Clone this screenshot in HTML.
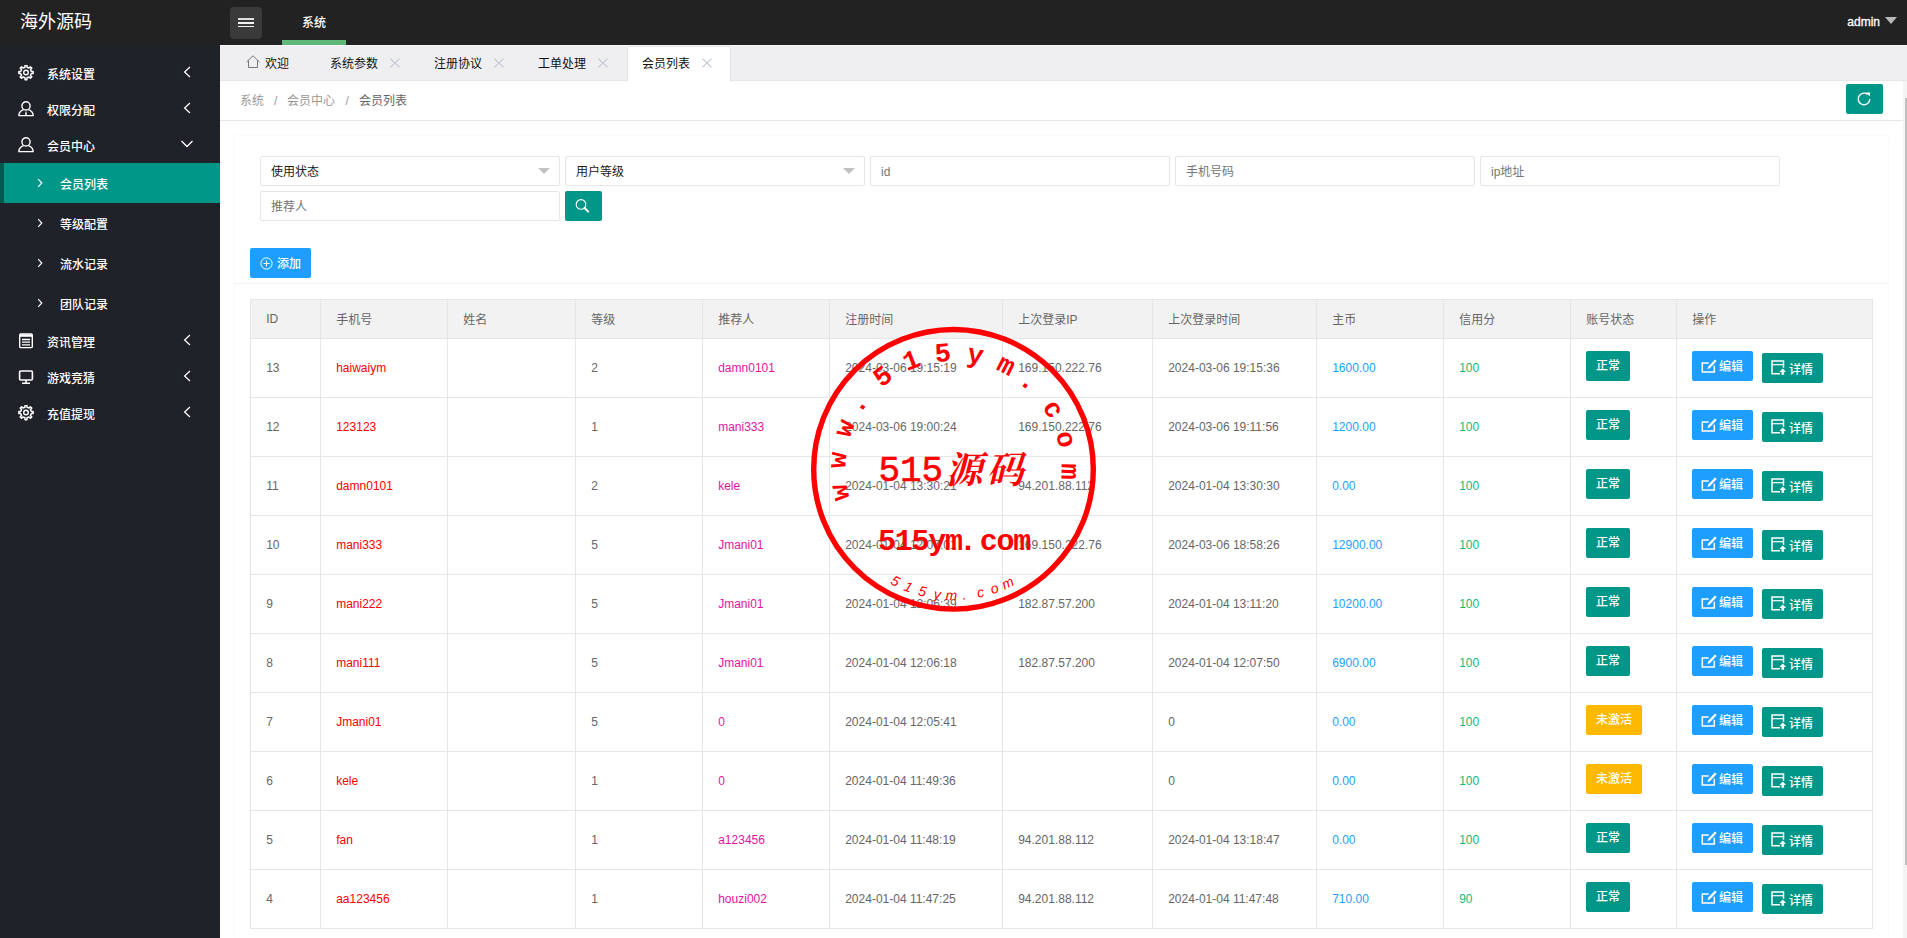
<!DOCTYPE html>
<html lang="zh-CN">
<head>
<meta charset="utf-8">
<title>海外源码</title>
<style>
*{box-sizing:border-box}
html,body{margin:0;padding:0}
html{width:1907px;height:938px;overflow:hidden}
body{width:1907px;height:938px;overflow:hidden;position:relative;background:#fff;font-family:"Liberation Sans","Noto Sans CJK SC",sans-serif;font-size:12px;color:#666}
.abs{position:absolute}
#header{left:0;top:0;width:1907px;height:45px;background:#222}
#logo{left:20px;top:0;height:45px;line-height:45px;font-size:18px;color:#fff}
#menubtn{left:230px;top:7px;width:32px;height:32px;border-radius:4px;background:#3a3a3a}
#menubtn i{position:absolute;left:8px;width:16px;height:1.400px;background:#f2f2f2}
#sys{left:282px;top:0;width:64px;height:45px;line-height:47px;font-weight:500;text-align:center;color:#fff}
#sysbar{left:282px;top:40px;width:64px;height:5px;background:#5FB878}
#admin{left:1838px;top:0;height:45px;line-height:44px;color:#fff;width:42px;text-align:right;-webkit-text-stroke:0.3px #fff}
#caret{left:1885px;top:17px;width:0;height:0;border-left:6px solid transparent;border-right:6px solid transparent;border-top:7px solid #b9b9b9}
#side{left:0;top:45px;width:220px;height:893px;background:#20222A}
.mi{position:absolute;left:0;width:220px;height:36px;line-height:36px;color:#fff}
.mi .t{position:absolute;left:47px;top:2px;font-weight:500}
.mi svg.ic{position:absolute;left:18px;top:10px}
.mi svg.ar{position:absolute;left:182px;top:10px}
.si{position:absolute;left:0;width:220px;height:40px;line-height:40px;color:#fff}
.si .t{position:absolute;left:60px;top:2px;font-weight:500}
.si svg{position:absolute;left:36px;top:14px}
.si.on{background:#009688;border-left:4px solid #04584f}
.si.on .t{left:56px}
.si.on svg{left:32px}
#tabs{left:220px;top:45px;width:1687px;height:36px;background:#EFEFF1;border-bottom:1px solid #e6e6e8;border-top:1px solid #f8f8f9}
.tab{position:absolute;top:-1px;height:35px;line-height:39px;color:#111}
.tab.on{background:#fff;height:36px;top:0.500px;line-height:34px;box-shadow:0 0 1.5px rgba(0,0,0,.18)}
.x{position:absolute;top:11.500px}
#crumb{left:220px;top:81px;width:1683px;height:40px;background:#fff;border-bottom:1px solid #e6e6e6;line-height:40px;color:#999}
#refresh{left:1846px;top:84px;width:37px;height:30px;background:#009688;border-radius:2px}
#card{left:235px;top:136px;width:1653px;height:802px;background:#fff;box-shadow:0 0 2px rgba(0,0,0,.06)}
#cardhead{left:235px;top:283px;width:1653px;height:1px;background:#f2f2f2}
.inp{position:absolute;width:300px;height:30px;border:1px solid #e6e6e6;border-radius:2px;background:#fff;line-height:30px;padding-left:10px;color:#757575}
.inp.sel{color:#1a1a1a;line-height:31px}
.inp.sel:after{content:"";position:absolute;right:9px;top:11px;border-left:6px solid transparent;border-right:6px solid transparent;border-top:6px solid #c2c2c2}
#search{left:565px;top:191px;width:37px;height:30px;background:#009688;border-radius:2px}
#add{left:250px;top:248px;width:61px;height:30px;background:#1E9FFF;border-radius:2px;color:#fff;line-height:32px;font-weight:500}
table{position:absolute;left:250px;top:299px;border-collapse:collapse;table-layout:fixed;width:1623px}
td.b{padding-left:15px}
th,td{border:1px solid #e6e6e6;padding:0 15px 0 15.200px;text-align:left;font-weight:normal;white-space:nowrap;overflow:visible}
th{height:39px;background:#f2f2f2;color:#666;padding-bottom:2px}
th:first-child{padding-bottom:0}
td{height:59px;color:#666}
td.red{color:#f00}
td.pink{color:#e5139f}
td.blue{color:#1E9FFF}
td.green{color:#16b777}
.btn{display:inline-block;height:30px;line-height:30px;border-radius:2px;color:#fff;text-align:center;vertical-align:top;position:relative;font-weight:500}
.btn.st{top:-2px}
.btn.ok{width:44px;background:#009688}
.btn.warn{width:56px;background:#FFB800}
.btn.edit{width:61px;background:#1E9FFF;top:-2px;margin-right:9px}
.btn.detail{width:61px;background:#009688;top:0}
.btn .bt{position:absolute;left:27px;top:0;line-height:33px}
.btn.detail .bt{line-height:34px}
.bi{position:absolute;left:9px;top:7px}
#sbtrack{left:1903px;top:81px;width:4px;height:857px;background:#f4f4f4}
#sbthumb{left:1905px;top:98px;width:2px;height:767px;background:#c1c1c1}
</style>
</head>
<body>
<div id="header" class="abs"></div>
<div id="logo" class="abs">海外源码</div>
<div id="menubtn" class="abs"><i style="top:11.2px;background:#ddd"></i><i style="top:15.2px"></i><i style="top:19px"></i></div>
<div id="sys" class="abs">系统</div>
<div id="sysbar" class="abs"></div>
<div id="admin" class="abs">admin</div>
<div id="caret" class="abs"></div>

<div id="side" class="abs">
  <div class="mi" style="top:10px"><svg class="ic" width="16" height="16" viewBox="0 0 16 16"><path d="M13.30 6.48 L15.14 6.55 L15.14 8.45 L13.30 8.52 L12.47 10.53 L13.72 11.88 L12.38 13.22 L11.03 11.97 L9.02 12.80 L8.95 14.64 L7.05 14.64 L6.98 12.80 L4.97 11.97 L3.62 13.22 L2.28 11.88 L3.53 10.53 L2.70 8.52 L0.86 8.45 L0.86 6.55 L2.70 6.48 L3.53 4.47 L2.28 3.12 L3.62 1.78 L4.97 3.03 L6.98 2.20 L7.05 0.36 L8.95 0.36 L9.02 2.20 L11.03 3.03 L12.38 1.78 L13.72 3.12 L12.47 4.47Z" fill="none" stroke="#fff" stroke-width="1.5" stroke-linejoin="round"/><circle cx="8" cy="7.5" r="2.3" fill="none" stroke="#fff" stroke-width="1.4"/></svg><span class="t">系统设置</span><svg class="ar" width="10" height="14" viewBox="0 0 10 14"><path d="M8 2L2.600 7 8 12" fill="none" stroke="#fff" stroke-width="1.25"/></svg></div>
  <div class="mi" style="top:46px"><svg class="ic" width="16" height="16" viewBox="0 0 16 16"><circle cx="8" cy="4.900" r="4.100" fill="none" stroke="#fff" stroke-width="1.4"/><path d="M.8 14.500c.2-3 2-5 4.800-5.900M15.200 14.500c-.2-3-2-5-4.800-5.900M.3 14.600h15.400" fill="none" stroke="#fff" stroke-width="1.4"/><path d="M8 9.500l-1 3.800 1 1 1-1z" fill="#fff"/></svg><span class="t">权限分配</span><svg class="ar" width="10" height="14" viewBox="0 0 10 14"><path d="M8 2L2.600 7 8 12" fill="none" stroke="#fff" stroke-width="1.25"/></svg></div>
  <div class="mi" style="top:82px"><svg class="ic" width="16" height="16" viewBox="0 0 16 16"><circle cx="8" cy="4.900" r="4.100" fill="none" stroke="#fff" stroke-width="1.4"/><path d="M.8 14.500c.2-3 2-5 4.800-5.900M15.200 14.500c-.2-3-2-5-4.800-5.900M.3 14.600h15.400" fill="none" stroke="#fff" stroke-width="1.4"/></svg><span class="t">会员中心</span><svg class="ar" style="left:180px;top:12px" width="14" height="10" viewBox="0 0 14 10"><path d="M1.5 2L7 7.5 12.5 2" fill="none" stroke="#fff" stroke-width="1.3"/></svg></div>
  <div class="si on" style="top:118px"><svg width="8" height="12" viewBox="0 0 8 12"><path d="M2.200 2.200L5.800 6 2.200 9.800" fill="none" stroke="#fff" stroke-width="1.200"/></svg><span class="t">会员列表</span></div>
  <div class="si" style="top:158px"><svg width="8" height="12" viewBox="0 0 8 12"><path d="M2.200 2.200L5.800 6 2.200 9.800" fill="none" stroke="#fff" stroke-width="1.200"/></svg><span class="t">等级配置</span></div>
  <div class="si" style="top:198px"><svg width="8" height="12" viewBox="0 0 8 12"><path d="M2.200 2.200L5.800 6 2.200 9.800" fill="none" stroke="#fff" stroke-width="1.200"/></svg><span class="t">流水记录</span></div>
  <div class="si" style="top:238px"><svg width="8" height="12" viewBox="0 0 8 12"><path d="M2.200 2.200L5.800 6 2.200 9.800" fill="none" stroke="#fff" stroke-width="1.200"/></svg><span class="t">团队记录</span></div>
  <div class="mi" style="top:278px"><svg class="ic" width="16" height="16" viewBox="0 0 16 16"><rect x="1.700" y="1" width="12.600" height="13.600" rx="1.200" fill="none" stroke="#fff" stroke-width="1.400"/><path d="M1.700 2.600h12.600" stroke="#fff" stroke-width="2.400"/><path d="M4 6.500h8M4 9.200h8M4 11.900h8" stroke="#fff" stroke-width="1.300"/></svg><span class="t">资讯管理</span><svg class="ar" width="10" height="14" viewBox="0 0 10 14"><path d="M8 2L2.600 7 8 12" fill="none" stroke="#fff" stroke-width="1.25"/></svg></div>
  <div class="mi" style="top:314px"><svg class="ic" width="16" height="16" viewBox="0 0 16 16"><rect x="1.6" y="2" width="12.8" height="9" rx="1" fill="none" stroke="#fff" stroke-width="1.6"/><path d="M8 11v3M4 14.2h8" stroke="#fff" stroke-width="1.6"/></svg><span class="t">游戏竞猜</span><svg class="ar" width="10" height="14" viewBox="0 0 10 14"><path d="M8 2L2.600 7 8 12" fill="none" stroke="#fff" stroke-width="1.25"/></svg></div>
  <div class="mi" style="top:350px"><svg class="ic" width="16" height="16" viewBox="0 0 16 16"><path d="M13.30 6.48 L15.14 6.55 L15.14 8.45 L13.30 8.52 L12.47 10.53 L13.72 11.88 L12.38 13.22 L11.03 11.97 L9.02 12.80 L8.95 14.64 L7.05 14.64 L6.98 12.80 L4.97 11.97 L3.62 13.22 L2.28 11.88 L3.53 10.53 L2.70 8.52 L0.86 8.45 L0.86 6.55 L2.70 6.48 L3.53 4.47 L2.28 3.12 L3.62 1.78 L4.97 3.03 L6.98 2.20 L7.05 0.36 L8.95 0.36 L9.02 2.20 L11.03 3.03 L12.38 1.78 L13.72 3.12 L12.47 4.47Z" fill="none" stroke="#fff" stroke-width="1.5" stroke-linejoin="round"/><circle cx="8" cy="7.5" r="2.3" fill="none" stroke="#fff" stroke-width="1.4"/></svg><span class="t">充值提现</span><svg class="ar" width="10" height="14" viewBox="0 0 10 14"><path d="M8 2L2.600 7 8 12" fill="none" stroke="#fff" stroke-width="1.25"/></svg></div>
</div>

<div id="tabs" class="abs">
  <div class="tab" style="left:25px;width:60px"><svg style="position:absolute;left:0;top:9px" width="16" height="16" viewBox="0 0 16 16"><path d="M1.5 8L8 1.8 14.5 8M3.5 6.5v7h9v-7" fill="none" stroke="#777" stroke-width="1"/></svg><span style="position:absolute;left:20px">欢迎</span></div>
  <div class="tab" style="left:110px">系统参数</div><svg class="x" style="left:390px;top:12px;position:absolute" width="10" height="10" viewBox="0 0 10 10"></svg>
  <div class="tab" style="left:214px">注册协议</div>
  <div class="tab" style="left:318px">工单处理</div>
  <div class="tab on" style="left:408px;width:102px"><span style="position:absolute;left:14px">会员列表</span></div>
  <svg class="x" style="left:170px" width="10" height="10" viewBox="0 0 10 10"><path d="M.4 .6l9.200 8.800M9.600 .6L.4 9.400" stroke="#c0c6d0" stroke-width="1.100"/></svg>
  <svg class="x" style="left:274px" width="10" height="10" viewBox="0 0 10 10"><path d="M.4 .6l9.200 8.800M9.600 .6L.4 9.400" stroke="#c0c6d0" stroke-width="1.100"/></svg>
  <svg class="x" style="left:378px" width="10" height="10" viewBox="0 0 10 10"><path d="M.4 .6l9.200 8.800M9.600 .6L.4 9.400" stroke="#c0c6d0" stroke-width="1.100"/></svg>
  <svg class="x" style="left:482px" width="10" height="10" viewBox="0 0 10 10"><path d="M.4 .6l9.200 8.800M9.600 .6L.4 9.400" stroke="#c0c6d0" stroke-width="1.100"/></svg>
</div>

<div id="crumb" class="abs"><span class="abs" style="left:20px">系统</span><span class="abs" style="left:54px">/</span><span class="abs" style="left:67px">会员中心</span><span class="abs" style="left:125.500px">/</span><span class="abs" style="left:139px;color:#666">会员列表</span></div>
<div id="refresh" class="abs"><svg style="position:absolute;left:9.500px;top:6.700px" width="16" height="16" viewBox="0 0 16 16"><path d="M13.800 8A5.800 5.800 0 1 1 11.500 3.400" fill="none" stroke="#fff" stroke-width="1.3"/><path d="M10 1.5h4v4z" fill="#fff"/></svg></div>

<div id="card" class="abs"></div>
<div id="cardhead" class="abs"></div>
<div class="inp sel" style="left:260px;top:156px">使用状态</div>
<div class="inp sel" style="left:565px;top:156px">用户等级</div>
<div class="inp" style="left:870px;top:156px">id</div>
<div class="inp" style="left:1175px;top:156px">手机号码</div>
<div class="inp" style="left:1480px;top:156px">ip地址</div>
<div class="inp" style="left:260px;top:191px">推荐人</div>
<div id="search" class="abs"><svg style="position:absolute;left:0;top:0" width="37" height="30" viewBox="0 0 37 30"><circle cx="16" cy="13.4" r="4.8" fill="none" stroke="#fff" stroke-width="1.1"/><path d="M19.600 17l3.600 3.600" stroke="#fff" stroke-width="2" stroke-linecap="round"/></svg></div>
<div id="add" class="abs"><svg style="position:absolute;left:10px;top:9px" width="13" height="13" viewBox="0 0 13 13"><circle cx="6.5" cy="6.5" r="5.6" fill="none" stroke="#fff" stroke-width="1"/><path d="M3.5 6.5h6M6.5 3.5v6" stroke="#fff" stroke-width="1"/></svg><span style="position:absolute;left:27px">添加</span></div>

<table>
<colgroup><col style="width:70px"><col style="width:127px"><col style="width:128px"><col style="width:127px"><col style="width:127px"><col style="width:173px"><col style="width:150px"><col style="width:164px"><col style="width:127px"><col style="width:127px"><col style="width:106px"><col style="width:196px"></colgroup>
<thead><tr><th>ID</th><th>手机号</th><th>姓名</th><th>等级</th><th>推荐人</th><th>注册时间</th><th>上次登录IP</th><th>上次登录时间</th><th>主币</th><th>信用分</th><th>账号状态</th><th>操作</th></tr></thead>
<tbody>
<tr><td>13</td><td class="red">haiwaiym</td><td></td><td>2</td><td class="pink">damn0101</td><td>2024-03-06 19:15:19</td><td>169.150.222.76</td><td>2024-03-06 19:15:36</td><td class="blue">1600.00</td><td class="green">100</td><td class="b"><span class="btn st ok">正常</span></td><td class="b"><span class="btn edit"><svg class="bi" viewBox="0 0 16 16" width="16" height="16"><path d="M13.3 7.8v6.1H1.3V5h6.4" fill="none" stroke="#fff" stroke-width="1.5"/><path d="M6.4 11.3l.9-2.9 6.600-7 1.800 1.700-6.600 7z" fill="#fff"/></svg><span class="bt">编辑</span></span><span class="btn detail"><svg class="bi" viewBox="0 0 16 16" width="16" height="16"><path d="M9 13.800H1V1h11.500v6.700" fill="none" stroke="#fff" stroke-width="1.5"/><path d="M1 4.700h11.500" stroke="#fff" stroke-width="1.2"/><path d="M11.800 8.400l3.400 3.600h-2.100v2.800h-2.600v-2.800H8.400z" fill="#fff"/></svg><span class="bt">详情</span></span></td></tr>
<tr><td>12</td><td class="red">123123</td><td></td><td>1</td><td class="pink">mani333</td><td>2024-03-06 19:00:24</td><td>169.150.222.76</td><td>2024-03-06 19:11:56</td><td class="blue">1200.00</td><td class="green">100</td><td class="b"><span class="btn st ok">正常</span></td><td class="b"><span class="btn edit"><svg class="bi" viewBox="0 0 16 16" width="16" height="16"><path d="M13.3 7.8v6.1H1.3V5h6.4" fill="none" stroke="#fff" stroke-width="1.5"/><path d="M6.4 11.3l.9-2.9 6.600-7 1.800 1.700-6.600 7z" fill="#fff"/></svg><span class="bt">编辑</span></span><span class="btn detail"><svg class="bi" viewBox="0 0 16 16" width="16" height="16"><path d="M9 13.800H1V1h11.500v6.700" fill="none" stroke="#fff" stroke-width="1.5"/><path d="M1 4.700h11.500" stroke="#fff" stroke-width="1.2"/><path d="M11.800 8.400l3.400 3.600h-2.100v2.800h-2.600v-2.800H8.400z" fill="#fff"/></svg><span class="bt">详情</span></span></td></tr>
<tr><td>11</td><td class="red">damn0101</td><td></td><td>2</td><td class="pink">kele</td><td>2024-01-04 13:30:21</td><td>94.201.88.112</td><td>2024-01-04 13:30:30</td><td class="blue">0.00</td><td class="green">100</td><td class="b"><span class="btn st ok">正常</span></td><td class="b"><span class="btn edit"><svg class="bi" viewBox="0 0 16 16" width="16" height="16"><path d="M13.3 7.8v6.1H1.3V5h6.4" fill="none" stroke="#fff" stroke-width="1.5"/><path d="M6.4 11.3l.9-2.9 6.600-7 1.800 1.700-6.600 7z" fill="#fff"/></svg><span class="bt">编辑</span></span><span class="btn detail"><svg class="bi" viewBox="0 0 16 16" width="16" height="16"><path d="M9 13.800H1V1h11.500v6.700" fill="none" stroke="#fff" stroke-width="1.5"/><path d="M1 4.700h11.500" stroke="#fff" stroke-width="1.2"/><path d="M11.800 8.400l3.400 3.600h-2.100v2.800h-2.600v-2.800H8.400z" fill="#fff"/></svg><span class="bt">详情</span></span></td></tr>
<tr><td>10</td><td class="red">mani333</td><td></td><td>5</td><td class="pink">Jmani01</td><td>2024-01-04 12:07:01</td><td>169.150.222.76</td><td>2024-03-06 18:58:26</td><td class="blue">12900.00</td><td class="green">100</td><td class="b"><span class="btn st ok">正常</span></td><td class="b"><span class="btn edit"><svg class="bi" viewBox="0 0 16 16" width="16" height="16"><path d="M13.3 7.8v6.1H1.3V5h6.4" fill="none" stroke="#fff" stroke-width="1.5"/><path d="M6.4 11.3l.9-2.9 6.600-7 1.800 1.700-6.600 7z" fill="#fff"/></svg><span class="bt">编辑</span></span><span class="btn detail"><svg class="bi" viewBox="0 0 16 16" width="16" height="16"><path d="M9 13.800H1V1h11.500v6.700" fill="none" stroke="#fff" stroke-width="1.5"/><path d="M1 4.700h11.500" stroke="#fff" stroke-width="1.2"/><path d="M11.800 8.400l3.400 3.600h-2.100v2.800h-2.600v-2.800H8.400z" fill="#fff"/></svg><span class="bt">详情</span></span></td></tr>
<tr><td>9</td><td class="red">mani222</td><td></td><td>5</td><td class="pink">Jmani01</td><td>2024-01-04 12:06:39</td><td>182.87.57.200</td><td>2024-01-04 13:11:20</td><td class="blue">10200.00</td><td class="green">100</td><td class="b"><span class="btn st ok">正常</span></td><td class="b"><span class="btn edit"><svg class="bi" viewBox="0 0 16 16" width="16" height="16"><path d="M13.3 7.8v6.1H1.3V5h6.4" fill="none" stroke="#fff" stroke-width="1.5"/><path d="M6.4 11.3l.9-2.9 6.600-7 1.800 1.700-6.600 7z" fill="#fff"/></svg><span class="bt">编辑</span></span><span class="btn detail"><svg class="bi" viewBox="0 0 16 16" width="16" height="16"><path d="M9 13.800H1V1h11.500v6.700" fill="none" stroke="#fff" stroke-width="1.5"/><path d="M1 4.700h11.500" stroke="#fff" stroke-width="1.2"/><path d="M11.800 8.400l3.400 3.600h-2.100v2.800h-2.600v-2.800H8.400z" fill="#fff"/></svg><span class="bt">详情</span></span></td></tr>
<tr><td>8</td><td class="red">mani111</td><td></td><td>5</td><td class="pink">Jmani01</td><td>2024-01-04 12:06:18</td><td>182.87.57.200</td><td>2024-01-04 12:07:50</td><td class="blue">6900.00</td><td class="green">100</td><td class="b"><span class="btn st ok">正常</span></td><td class="b"><span class="btn edit"><svg class="bi" viewBox="0 0 16 16" width="16" height="16"><path d="M13.3 7.8v6.1H1.3V5h6.4" fill="none" stroke="#fff" stroke-width="1.5"/><path d="M6.4 11.3l.9-2.9 6.600-7 1.800 1.700-6.600 7z" fill="#fff"/></svg><span class="bt">编辑</span></span><span class="btn detail"><svg class="bi" viewBox="0 0 16 16" width="16" height="16"><path d="M9 13.800H1V1h11.500v6.700" fill="none" stroke="#fff" stroke-width="1.5"/><path d="M1 4.700h11.500" stroke="#fff" stroke-width="1.2"/><path d="M11.800 8.400l3.400 3.600h-2.100v2.800h-2.600v-2.800H8.400z" fill="#fff"/></svg><span class="bt">详情</span></span></td></tr>
<tr><td>7</td><td class="red">Jmani01</td><td></td><td>5</td><td class="pink">0</td><td>2024-01-04 12:05:41</td><td></td><td>0</td><td class="blue">0.00</td><td class="green">100</td><td class="b"><span class="btn st warn">未激活</span></td><td class="b"><span class="btn edit"><svg class="bi" viewBox="0 0 16 16" width="16" height="16"><path d="M13.3 7.8v6.1H1.3V5h6.4" fill="none" stroke="#fff" stroke-width="1.5"/><path d="M6.4 11.3l.9-2.9 6.600-7 1.800 1.700-6.600 7z" fill="#fff"/></svg><span class="bt">编辑</span></span><span class="btn detail"><svg class="bi" viewBox="0 0 16 16" width="16" height="16"><path d="M9 13.800H1V1h11.500v6.700" fill="none" stroke="#fff" stroke-width="1.5"/><path d="M1 4.700h11.500" stroke="#fff" stroke-width="1.2"/><path d="M11.800 8.400l3.400 3.600h-2.100v2.800h-2.600v-2.800H8.400z" fill="#fff"/></svg><span class="bt">详情</span></span></td></tr>
<tr><td>6</td><td class="red">kele</td><td></td><td>1</td><td class="pink">0</td><td>2024-01-04 11:49:36</td><td></td><td>0</td><td class="blue">0.00</td><td class="green">100</td><td class="b"><span class="btn st warn">未激活</span></td><td class="b"><span class="btn edit"><svg class="bi" viewBox="0 0 16 16" width="16" height="16"><path d="M13.3 7.8v6.1H1.3V5h6.4" fill="none" stroke="#fff" stroke-width="1.5"/><path d="M6.4 11.3l.9-2.9 6.600-7 1.800 1.700-6.600 7z" fill="#fff"/></svg><span class="bt">编辑</span></span><span class="btn detail"><svg class="bi" viewBox="0 0 16 16" width="16" height="16"><path d="M9 13.800H1V1h11.500v6.700" fill="none" stroke="#fff" stroke-width="1.5"/><path d="M1 4.700h11.500" stroke="#fff" stroke-width="1.2"/><path d="M11.800 8.400l3.400 3.600h-2.100v2.800h-2.600v-2.800H8.400z" fill="#fff"/></svg><span class="bt">详情</span></span></td></tr>
<tr><td>5</td><td class="red">fan</td><td></td><td>1</td><td class="pink">a123456</td><td>2024-01-04 11:48:19</td><td>94.201.88.112</td><td>2024-01-04 13:18:47</td><td class="blue">0.00</td><td class="green">100</td><td class="b"><span class="btn st ok">正常</span></td><td class="b"><span class="btn edit"><svg class="bi" viewBox="0 0 16 16" width="16" height="16"><path d="M13.3 7.8v6.1H1.3V5h6.4" fill="none" stroke="#fff" stroke-width="1.5"/><path d="M6.4 11.3l.9-2.9 6.600-7 1.800 1.700-6.600 7z" fill="#fff"/></svg><span class="bt">编辑</span></span><span class="btn detail"><svg class="bi" viewBox="0 0 16 16" width="16" height="16"><path d="M9 13.800H1V1h11.500v6.700" fill="none" stroke="#fff" stroke-width="1.5"/><path d="M1 4.700h11.500" stroke="#fff" stroke-width="1.2"/><path d="M11.800 8.400l3.400 3.600h-2.100v2.800h-2.600v-2.800H8.400z" fill="#fff"/></svg><span class="bt">详情</span></span></td></tr>
<tr><td>4</td><td class="red">aa123456</td><td></td><td>1</td><td class="pink">houzi002</td><td>2024-01-04 11:47:25</td><td>94.201.88.112</td><td>2024-01-04 11:47:48</td><td class="blue">710.00</td><td class="green">90</td><td class="b"><span class="btn st ok">正常</span></td><td class="b"><span class="btn edit"><svg class="bi" viewBox="0 0 16 16" width="16" height="16"><path d="M13.3 7.8v6.1H1.3V5h6.4" fill="none" stroke="#fff" stroke-width="1.5"/><path d="M6.4 11.3l.9-2.9 6.600-7 1.800 1.700-6.600 7z" fill="#fff"/></svg><span class="bt">编辑</span></span><span class="btn detail"><svg class="bi" viewBox="0 0 16 16" width="16" height="16"><path d="M9 13.800H1V1h11.500v6.700" fill="none" stroke="#fff" stroke-width="1.5"/><path d="M1 4.700h11.500" stroke="#fff" stroke-width="1.2"/><path d="M11.800 8.400l3.400 3.600h-2.100v2.800h-2.600v-2.800H8.400z" fill="#fff"/></svg><span class="bt">详情</span></span></td></tr>
</tbody>
</table>

<div id="sbtrack" class="abs"></div>
<div id="sbthumb" class="abs"></div>

<svg class="abs" style="left:803px;top:319px" width="300" height="300" viewBox="0 0 300 300">
  <circle cx="150.500" cy="150.300" r="139.800" fill="none" stroke="#f00" stroke-width="5.400"/>
  <text x="46.4 42.2 46.5 56.7 78.5 103.7 132.6 162.9 192.2 214.8 239.0 252.8 258.7" y="179.8 149.8 119.8 95.9 69.1 52.3 43.2 42.4 50.1 62.9 87.6 114.5 144.3" rotate="-101.7 -85.6 -69.5 -55.8 -37.4 -21.3 -5.2 10.9 26.9 40.7 59.1 75.2 91.3" font-family="'Liberation Mono',monospace" font-weight="bold" font-size="27" fill="#f00">www.515ym.com</text>
  <text x="75.4 97.0 118.6 142.5 183.5" y="161.7" font-family="'Liberation Mono','Noto Serif CJK SC',serif" font-size="36" fill="#f00" stroke="#f00" stroke-width="0.6">515<tspan font-style="italic" font-weight="700" font-size="37" stroke="none" dy="2">源码</tspan></text>
  <text x="75.1 91.8 108.5 125.2 141.9 156.1 176.8 193.5 210.2" y="230.5" font-family="'Liberation Mono',monospace" font-weight="bold" font-size="30" fill="#f00">515ym.com</text>
  <text x="86.8 100.1 114.4 130.2 142.6 159.8 175.0 189.3 201.6" y="264.5 271.0 276.0 279.5 280.9 280.7 278.7 275.2 270.7" rotate="27.4 20.9 14.3 7.4 0.9 -4.9 -12.3 -18.9 -25.5" font-family="'Liberation Sans',sans-serif" font-weight="normal" font-size="14" fill="#f00" font-style="italic">515ym.com</text>
</svg>
</body>
</html>
